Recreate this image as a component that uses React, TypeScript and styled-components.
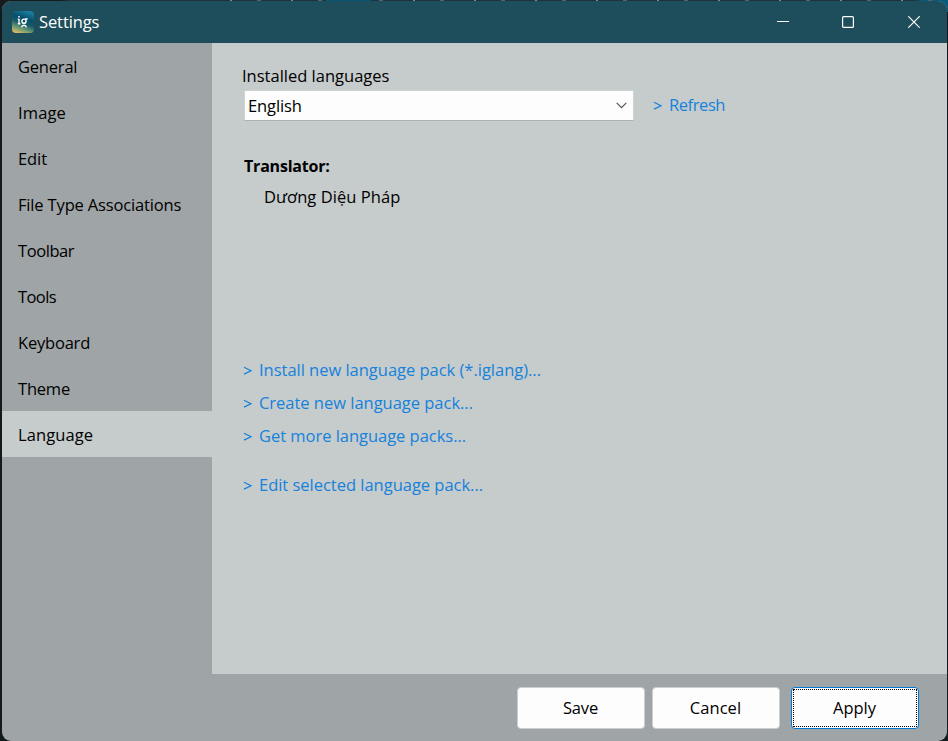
import React from "react";
import styled, { createGlobalStyle } from "styled-components";

const GlobalStyle = createGlobalStyle`
  * { box-sizing: border-box; }
  html, body { margin: 0; padding: 0; overflow: hidden; background: #181b1c; }
  body { font-family: "Segoe UI", "Open Sans", "Noto Sans", sans-serif; font-size: 16.5px; color: #000; }
`;

const Desktop = styled.div`
  width: 948px;
  height: 741px;
  padding: 1px 1px 0 2px;
  overflow: hidden;
  background:
    linear-gradient(90deg, transparent 0 126px, #075570 126px 171px, transparent 171px) 200px 0 / 300px 1px no-repeat,
    repeating-linear-gradient(90deg, transparent 0 30px, #7b8a90 30px 32px, transparent 32px 57px, #52646b 57px 61px) 200px 0 / 748px 1px no-repeat,
    linear-gradient(90deg, #181b1c 0 60px, #20323c 70px 915px, #075b7d 922px) 0 0 / 100% 12px no-repeat,
    #111b1e;
`;

const Window = styled.div`
  display: flex;
  flex-direction: column;
  height: 740px;
  border-radius: 9px;
  overflow: hidden;
  background: #9fa4a6;
`;

const TitleBar = styled.header`
  display: flex;
  align-items: center;
  flex: 0 0 42px;
  padding-left: 10px;
  background: #1e4e5b;
  color: #fff;
`;

const Text = styled.span<{ $spacing?: number }>`
  display: block;
  line-height: 24px;
  white-space: pre;
  letter-spacing: ${(p) => p.$spacing ?? 0}px;
`;

const Title = styled.div`
  flex: 1;
  padding-left: 5px;
`;

const Caption = styled.button`
  display: grid;
  place-items: center;
  width: 66px;
  height: 42px;
  padding: 0;
  border: 0;
  background: transparent;
  color: #fff;
`;

const Body = styled.div`
  display: flex;
  flex: 1;
  min-height: 0;
`;

const Sidebar = styled.nav`
  flex: 0 0 210px;
`;

const NavItem = styled.div<{ $active?: boolean }>`
  height: 46px;
  padding: 12px 0 0 16px;
  background: ${(p) => (p.$active ? "#c6cbcb" : "transparent")};
`;

const Main = styled.div`
  display: flex;
  flex-direction: column;
  flex: 1;
`;

const Panel = styled.main`
  height: 631px;
  padding: 21px 0 0 30px;
  background: #c6cbcb;
`;

const SelectRow = styled.div`
  display: flex;
  align-items: flex-start;
  gap: 19px;
  height: 31px;
  margin-top: 2px;
  padding-left: 2px;
`;

const Select = styled.div`
  display: flex;
  align-items: center;
  justify-content: space-between;
  width: 390px;
  height: 31px;
  padding: 0 6px 0 3px;
  border: 1px solid #cfd2d2;
  border-bottom-color: #adb1b1;
  background: #fdfdfd;
`;

const SelectAction = styled.div`
  padding-top: 3px;
`;

const Translator = styled.section`
  height: 237px;
  padding: 33px 0 0 2px;
`;

const Heading = styled.h2`
  margin: 0;
  font-size: 16px;
  font-weight: 700;
`;

const TranslatorName = styled.div`
  padding: 7px 0 0 20px;
`;

const Links = styled.div`
  display: flex;
  flex-direction: column;
  gap: 9px;
  padding-left: 1px;
`;

const LinkRow = styled.a<{ $separate?: boolean }>`
  display: flex;
  margin-top: ${(p) => (p.$separate ? 16 : 0)}px;
  color: #1582dc;
`;

const Arrow = styled.svg`
  flex: none;
  width: 16px;
  height: 24px;
`;

const Footer = styled.footer`
  display: flex;
  height: 67px;
  padding: 13px 0 0 305px;
`;

const Button = styled.button<{ $focused?: boolean }>`
  width: 128px;
  height: 42px;
  margin: 0 ${(p) => (p.$focused ? 0 : 7)}px 0 ${(p) => (p.$focused ? 4 : 0)}px;
  padding: 1px;
  border: 1px solid ${(p) => (p.$focused ? "#0078d4" : "#cccece")};
  border-radius: 4px;
  background: #fdfdfd;
  color: #000;
  font: inherit;
`;

const ButtonFace = styled.span<{ $focused?: boolean }>`
  display: grid;
  place-items: center;
  height: 100%;
  padding-right: 1px;
  border: 1px dotted ${(p) => (p.$focused ? "#000" : "transparent")};
`;

const AppLogo = () => (
  <svg width="22" height="22" viewBox="0 0 22 22">
    <defs>
      <linearGradient id="logo" x1=".25" y1="1" x2=".6" y2="0">
        <stop offset="0" stopColor="#d9b962" />
        <stop offset=".22" stopColor="#6f9a72" />
        <stop offset=".48" stopColor="#14586a" />
        <stop offset=".7" stopColor="#06506c" />
        <stop offset="1" stopColor="#1a7c9c" />
      </linearGradient>
    </defs>
    <rect width="22" height="22" rx="4" fill="url(#logo)" />
    <g fill="none" stroke="#fff" strokeWidth="1.4">
      <path d="M7 7.7V13M7 5V6.5M5.8 8.3H7M5.8 12.7h2.6" />
      <circle cx="12" cy="10.2" r="2.1" />
      <path d="M13 8h2.7M9.6 16.3c.3-1.4 1.1-2 2.4-2s2.1.6 2.4 2" />
    </g>
  </svg>
);

const navigation = [
  { label: "General", spacing: -0.2 },
  { label: "Image", spacing: 0.15 },
  { label: "Edit", spacing: -0.1 },
  { label: "File Type Associations", spacing: -0.16 },
  { label: "Toolbar", spacing: -0.42 },
  { label: "Tools", spacing: -0.6 },
  { label: "Keyboard", spacing: -0.2 },
  { label: "Theme", spacing: -0.2 },
  { label: "Language", spacing: 0.1 },
];

const links = [
  { label: "Install new language pack (*.iglang)...", spacing: -0.02 },
  { label: "Create new language pack...", spacing: -0.02 },
  { label: "Get more language packs...", spacing: -0.03 },
  { label: "Edit selected language pack...", spacing: -0.02, separate: true },
];

const buttons = [
  { label: "Save", spacing: -0.15 },
  { label: "Cancel", spacing: 0.05 },
  { label: "Apply", spacing: 0, focused: true },
];

type ActionLinkProps = { label: string; spacing: number; separate?: boolean };

const ActionLink = ({ label, spacing, separate }: ActionLinkProps) => (
  <LinkRow $separate={separate}>
    <Arrow viewBox="0 0 16 24">
      <path d="M1 9.3L8 12.7L1 16.1" fill="none" stroke="currentColor" strokeWidth="1.2" />
    </Arrow>
    <Text $spacing={spacing}>{label}</Text>
  </LinkRow>
);

export default function App() {
  return (
    <Desktop>
      <GlobalStyle />
      <Window>
        <TitleBar>
          <AppLogo />
          <Title><Text $spacing={-0.1}>Settings</Text></Title>
          <Caption aria-label="Minimize">
            <svg width="12" height="12" viewBox="-1 0 12 12" overflow="visible"><path d="M0 5.5H12" stroke="currentColor" /></svg>
          </Caption>
          <Caption aria-label="Maximize">
            <svg width="12" height="12"><rect x=".6" y=".6" width="10.8" height="10.8" rx="1" fill="none" stroke="currentColor" strokeWidth="1.2" /></svg>
          </Caption>
          <Caption aria-label="Close">
            <svg width="12" height="12"><path d="M.3 .3L11.7 11.7M11.7 .3L.3 11.7" stroke="currentColor" strokeWidth="1.2" /></svg>
          </Caption>
        </TitleBar>
        <Body>
          <Sidebar>
            {navigation.map((n) => (
              <NavItem key={n.label} $active={n.label === "Language"}><Text $spacing={n.spacing}>{n.label}</Text></NavItem>
            ))}
          </Sidebar>
          <Main>
            <Panel>
              <Text $spacing={0}>Installed languages</Text>
              <SelectRow>
                <Select>
                  <Text $spacing={-0.1}>English</Text>
                  <svg width="11" height="7"><path d="M.7 .8L5.5 5.6L10.3 .8" fill="none" stroke="#555" strokeWidth="1.2" /></svg>
                </Select>
                <SelectAction><ActionLink label="Refresh" spacing={-0.42} /></SelectAction>
              </SelectRow>
              <Translator>
                <Heading><Text $spacing={-0.2}>Translator:</Text></Heading>
                <TranslatorName><Text $spacing={0.06}>Dương Diệu Pháp</Text></TranslatorName>
              </Translator>
              <Links>
                {links.map((l) => <ActionLink key={l.label} {...l} />)}
              </Links>
            </Panel>
            <Footer>
              {buttons.map((b) => (
                <Button key={b.label} $focused={b.focused}>
                  <ButtonFace $focused={b.focused}><Text $spacing={b.spacing}>{b.label}</Text></ButtonFace>
                </Button>
              ))}
            </Footer>
          </Main>
        </Body>
      </Window>
    </Desktop>
  );
}
